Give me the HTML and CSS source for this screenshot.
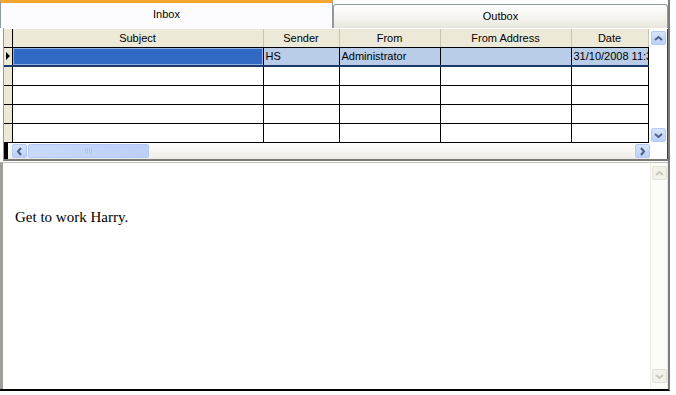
FILE: index.html
```html
<!DOCTYPE html>
<html>
	<head>
		<meta charset="UTF-8">
		<title>Messages</title>
		<link rel="stylesheet" href="styles.css">
	</head>
	<body>
		<div class="window">
			<div class="tabs">
				<div class="tab active">Inbox</div>
				<div class="tab">Outbox</div>
			</div>

			<div class="gridPanel">
				<div class="gridMain">
					<table class="grid">
						<colgroup>
							<col class="c-head">
							<col class="c-subject">
							<col class="c-sender">
							<col class="c-from">
							<col class="c-address">
							<col class="c-date">
						</colgroup>
						<thead>
							<tr>
								<th class="rowHead"></th>
								<th>Subject</th>
								<th>Sender</th>
								<th>From</th>
								<th>From Address</th>
								<th class="dateHead">Date</th>
							</tr>
						</thead>
						<tbody>
							<tr class="selected">
								<td class="rowHead"><span class="pointer"></span></td>
								<td class="current"></td>
								<td>HS</td>
								<td>Administrator</td>
								<td></td>
								<td class="clip">31/10/2008 11:32</td>
							</tr>
							<tr><td class="rowHead"></td><td></td><td></td><td></td><td></td><td></td></tr>
							<tr><td class="rowHead"></td><td></td><td></td><td></td><td></td><td></td></tr>
							<tr><td class="rowHead"></td><td></td><td></td><td></td><td></td><td></td></tr>
							<tr><td class="rowHead"></td><td></td><td></td><td></td><td></td><td></td></tr>
						</tbody>
					</table>

					<div class="hscroll">
						<span class="sbtn"><svg width="9" height="9" viewBox="0 0 9 9"><path d="M6 1 L3 4.5 L6 8" fill="none" stroke="#4d6185" stroke-width="2"/></svg></span>
						<span class="thumb"><svg width="8" height="6" viewBox="0 0 8 6"><path d="M0.5 0v6M2.5 0v6M4.5 0v6M6.5 0v6" stroke="#aec5ef" stroke-width="1"/></svg></span>
						<span class="track"></span>
						<span class="sbtn"><svg width="9" height="9" viewBox="0 0 9 9"><path d="M3 1 L6 4.5 L3 8" fill="none" stroke="#4d6185" stroke-width="2"/></svg></span>
					</div>
				</div>

				<div class="vscroll">
					<span class="sbtn"><svg width="9" height="9" viewBox="0 0 9 9"><path d="M1 6 L4.5 3 L8 6" fill="none" stroke="#4d6185" stroke-width="2"/></svg></span>
					<span class="track"></span>
					<span class="sbtn"><svg width="9" height="9" viewBox="0 0 9 9"><path d="M1 3 L4.5 6 L8 3" fill="none" stroke="#4d6185" stroke-width="2"/></svg></span>
					<span class="corner"></span>
				</div>
			</div>

			<div class="preview">
				<div class="body">Get to work Harry.</div>
				<div class="vscroll disabled">
					<span class="sbtn"><svg width="9" height="9" viewBox="0 0 9 9"><path d="M1 6 L4.5 3 L8 6" fill="none" stroke="#c9c7ba" stroke-width="2"/></svg></span>
					<span class="track"></span>
					<span class="sbtn"><svg width="9" height="9" viewBox="0 0 9 9"><path d="M1 3 L4.5 6 L8 3" fill="none" stroke="#c9c7ba" stroke-width="2"/></svg></span>
				</div>
			</div>
		</div>
	</body>
</html>
```

FILE: styles.css
```css
html {
	box-sizing: border-box;
	font-family: Tahoma, "Liberation Sans", "DejaVu Sans", sans-serif;
	font-size: 11px;
}
*, *:before, *:after {
	box-sizing: inherit;
}

body {
	margin: 0;
	background: #fff;
	color: #000;
}

.window {
	width: 670px;
	height: 391px;
	display: flex;
	flex-direction: column;
	border-right: 2px solid #7d7d7d;
	border-bottom: 2px solid #000;
}

/* tabs */
.tabs {
	display: flex;
	align-items: flex-end;
	height: 28px;
}
.tab {
	flex: 1;
	height: 24px;
	padding-top: 5px;
	text-align: center;
	border: 1px solid #919b9c;
	border-bottom: none;
	border-radius: 3px 3px 0 0;
	background: linear-gradient(#fefefe, #f4f3ee 60%, #e8e6dc);
}
.tab.active {
	flex: none;
	width: 333px;
	height: 28px;
	padding-top: 5px;
	border-top: 3px solid #f6a531;
	border-radius: 0;
	background: #fcfcfe;
}

/* grid */
.gridPanel {
	display: flex;
	height: 133px;
	flex: none;
	margin-left: 3px;
	padding-top: 1px;
	border-left: 1px solid #7f9db9;
	border-bottom: 2px solid #7a7a7a;
}
.gridMain {
	flex: 1;
	display: flex;
	flex-direction: column;
	min-width: 0;
}

.grid {
	table-layout: fixed;
	border-collapse: collapse;
	width: 644px;
	font-size: 11px;
}
.c-head { width: 8px; }
.c-subject { width: 251px; }
.c-sender { width: 76px; }
.c-from { width: 101px; }
.c-address { width: 131px; }
.c-date { width: 77px; }

.grid th {
	height: 18px;
	padding: 1px 0 0;
	font-weight: normal;
	background: #ece9d8;
	border-right: 1px solid #c7c5b2;
	border-bottom: 1px solid #000;
	white-space: nowrap;
}
.grid th.rowHead {
	border-right: 1px solid #000;
}
.grid td {
	height: 19px;
	padding: 0 2px;
	border: 1px solid #000;
	white-space: nowrap;
	overflow: hidden;
}
.grid td.rowHead {
	padding: 0;
	background: #ece9d8;
	border-left: none;
}
.pointer {
	display: block;
	width: 0;
	height: 0;
	margin-left: 2px;
	border-top: 4px solid transparent;
	border-bottom: 4px solid transparent;
	border-left: 4px solid #000;
}
.selected td {
	background: #b9cde9;
	border-top: 1px solid #000;
	border-bottom: 2px solid #1d3a6b;
}
.selected td.current {
	background: #316ac5;
	box-shadow: inset 0 0 0 1px #8fb0e4;
}
.clip {
	text-overflow: clip;
}

/* scroll bars */
.hscroll {
	display: flex;
	align-items: center;
	height: 16px;
	margin-top: auto;
	padding-left: 4px;
	border-left: 4px solid #000;
	background: linear-gradient(#fefefe, #eeede5);
}
.sbtn {
	display: flex;
	align-items: center;
	justify-content: center;
	width: 15px;
	height: 14px;
	border: 1px solid #b4c8f6;
	border-radius: 2px;
	background: linear-gradient(#d6e4fd, #bcd0f7);
}
.thumb {
	display: flex;
	align-items: center;
	justify-content: center;
	width: 121px;
	height: 14px;
	margin-left: 1px;
	border: 1px solid #b4c8f6;
	border-radius: 2px;
	background: linear-gradient(90deg, #c9dafc, #bcd0f8);
}
.track {
	flex: 1;
}

.vscroll {
	display: flex;
	flex-direction: column;
	align-items: center;
	width: 18px;
	padding-top: 2px;
	border-right: 1px solid #404040;
	background: #fefefe;
}
.vscroll .sbtn {
	width: 15px;
	height: 14px;
}
.vscroll .corner {
	height: 17px;
}

/* preview */
.preview {
	flex: 1;
	display: flex;
	margin-top: 1px;
	border-left: 3px solid #a09f97;
	border-top: 1px solid #c3c1b4;
}
.preview .body {
	flex: 1;
	padding: 46px 12px;
	font-family: "Liberation Serif", "Times New Roman", serif;
	font-size: 15px;
}
.preview .vscroll {
	width: 18px;
	padding: 3px 0 6px;
	border-right: 1px solid #ece9d8;
	border-left: 1px solid #f0efe8;
	background: #fcfcf8;
}
.vscroll.disabled .sbtn {
	border-color: #e4e2d8;
	background: #f2f1ea;
}
```
